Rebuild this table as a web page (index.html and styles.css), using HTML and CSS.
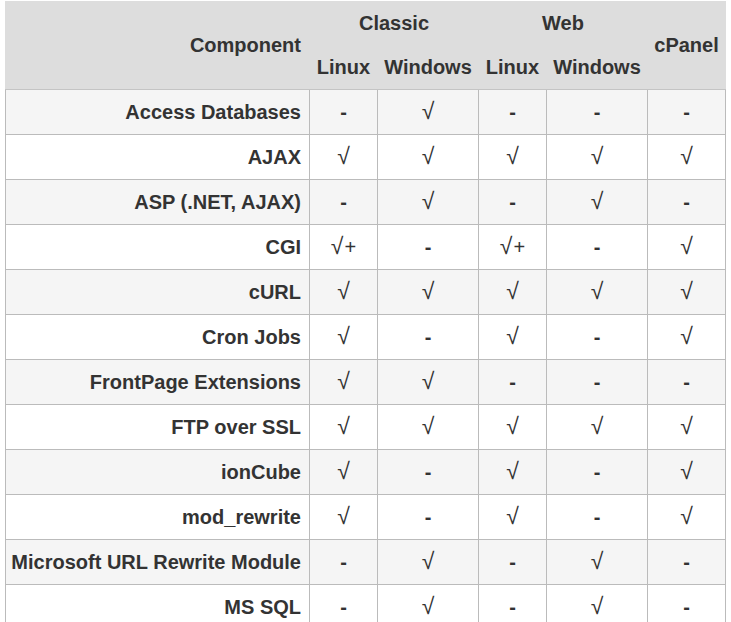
FILE: index.html
```html
<!DOCTYPE html>
<html lang="en">
<head>
<meta charset="utf-8">
<title>Components</title>
<link rel="stylesheet" href="styles.css">
</head>
<body>
<table class="cmp">
  <colgroup>
    <col class="c-name">
    <col class="c-narrow">
    <col class="c-wide">
    <col class="c-narrow">
    <col class="c-wide">
    <col class="c-panel">
  </colgroup>
  <thead>
    <tr class="top">
      <th rowspan="2" class="name last">Component</th>
      <th colspan="2">Classic</th>
      <th colspan="2">Web</th>
      <th rowspan="2" class="last">cPanel</th>
    </tr>
    <tr>
      <th class="last">Linux</th>
      <th class="last">Windows</th>
      <th class="last">Linux</th>
      <th class="last">Windows</th>
    </tr>
  </thead>
  <tbody>
    <tr><th class="name">Access Databases</th><td>-</td><td><span class="ck">√</span></td><td>-</td><td>-</td><td>-</td></tr>
    <tr><th class="name">AJAX</th><td><span class="ck">√</span></td><td><span class="ck">√</span></td><td><span class="ck">√</span></td><td><span class="ck">√</span></td><td><span class="ck">√</span></td></tr>
    <tr><th class="name">ASP (.NET, AJAX)</th><td>-</td><td><span class="ck">√</span></td><td>-</td><td><span class="ck">√</span></td><td>-</td></tr>
    <tr><th class="name">CGI</th><td><span class="ck">√</span><span class="plus">+</span></td><td>-</td><td><span class="ck">√</span><span class="plus">+</span></td><td>-</td><td><span class="ck">√</span></td></tr>
    <tr><th class="name">cURL</th><td><span class="ck">√</span></td><td><span class="ck">√</span></td><td><span class="ck">√</span></td><td><span class="ck">√</span></td><td><span class="ck">√</span></td></tr>
    <tr><th class="name">Cron Jobs</th><td><span class="ck">√</span></td><td>-</td><td><span class="ck">√</span></td><td>-</td><td><span class="ck">√</span></td></tr>
    <tr><th class="name">FrontPage Extensions</th><td><span class="ck">√</span></td><td><span class="ck">√</span></td><td>-</td><td>-</td><td>-</td></tr>
    <tr><th class="name">FTP over SSL</th><td><span class="ck">√</span></td><td><span class="ck">√</span></td><td><span class="ck">√</span></td><td><span class="ck">√</span></td><td><span class="ck">√</span></td></tr>
    <tr><th class="name">ionCube</th><td><span class="ck">√</span></td><td>-</td><td><span class="ck">√</span></td><td>-</td><td><span class="ck">√</span></td></tr>
    <tr><th class="name">mod_rewrite</th><td><span class="ck">√</span></td><td>-</td><td><span class="ck">√</span></td><td>-</td><td><span class="ck">√</span></td></tr>
    <tr><th class="name">Microsoft URL Rewrite Module</th><td>-</td><td><span class="ck">√</span></td><td>-</td><td><span class="ck">√</span></td><td>-</td></tr>
    <tr><th class="name">MS SQL</th><td>-</td><td><span class="ck">√</span></td><td>-</td><td><span class="ck">√</span></td><td>-</td></tr>
  </tbody>
</table>
</body>
</html>
```

FILE: styles.css
```css
html, body {
  margin: 0;
  padding: 0;
  background: #ffffff;
}

body {
  padding: 1px 0 0 5px;
  font-family: "Liberation Sans", Arial, sans-serif;
  font-size: 20px;
  font-weight: bold;
  color: #333333;
}

.cmp {
  border-collapse: collapse;
  table-layout: fixed;
  width: 721px;
}

.c-name { width: 304px; }
.c-narrow { width: 68px; }
.c-wide { width: 101px; }
.c-panel { width: 78px; }

.cmp thead th {
  background: #dddddd;
  border: 1px solid #dddddd;
  height: 43px;
  padding: 0;
  text-align: center;
  vertical-align: middle;
  font-weight: bold;
}

.cmp thead th.last {
  border-bottom-color: #c4c4c4;
}

.cmp thead th.name {
  text-align: right;
  padding-right: 8px;
}

.cmp tbody th,
.cmp tbody td {
  border: 1px solid #bbbbbb;
  height: 45px;
  padding: 0;
  text-align: center;
  vertical-align: middle;
  box-sizing: border-box;
}

.cmp tbody th.name {
  text-align: right;
  padding-right: 8px;
  font-weight: bold;
}

.cmp tbody tr:nth-child(odd) {
  background: #f5f5f5;
}

.cmp tbody tr:nth-child(even) {
  background: #ffffff;
}

.ck {
  font-weight: normal;
  font-size: 23px;
  line-height: 20px;
}

.plus {
  font-weight: normal;
  margin-left: 1px;
}
```
